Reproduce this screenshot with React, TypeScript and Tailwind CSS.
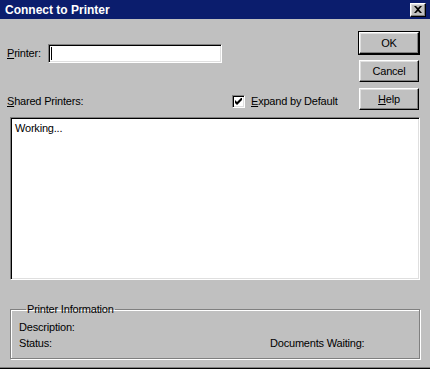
import React from "react";

const sunken =
  "border border-t-[#808080] border-l-[#808080] border-r-white border-b-white shadow-[inset_1px_1px_0_#000,inset_-1px_-1px_0_#dfdfdf]";
const raised =
  "border border-t-white border-l-white border-r-black border-b-black shadow-[inset_-1px_-1px_0_#808080,inset_1px_1px_0_#dfdfdf]";

const Btn = ({ label, def }: { label: React.ReactNode; def?: boolean }) => (
  <div className={def ? "border border-black" : "border border-transparent"}>
    <button className={`w-full h-[22px] bg-[#c0c0c0] text-[11px] ${raised}`}>{label}</button>
  </div>
);

const App = () => {
  return (
    <div
      className="w-[430px] h-[369px] bg-[#c0c0c0] flex flex-col text-black text-[11px] tracking-[-0.2px] border-b border-b-black shadow-[inset_0_-1px_0_#808080]"
      style={{ fontFamily: '"Liberation Sans", Arial, sans-serif' }}
    >
      {/* title bar */}
      <div className="h-[19px] bg-[#0b1d6d] flex items-center justify-between pl-[5px] pr-[4px]">
        <span className="text-white font-bold text-[12px] leading-none tracking-normal">Connect to Printer</span>
        <div className={`w-[16px] h-[14px] bg-[#c0c0c0] flex items-center justify-center ${raised}`}>
          <svg width="8" height="7" viewBox="0 0 8 7">
            <path d="M0 0h2l2 2 2-2h2L5 3.5 8 7H6L4 5 2 7H0l3-3.5z" fill="#000" />
          </svg>
        </div>
      </div>

      <div className="flex-1 flex flex-col pl-[7px] pr-[10px]">
        {/* top area */}
        <div className="h-[98px] flex">
          <div className="flex-1 flex flex-col pt-[25px]">
            <div className="flex items-center h-[19px]">
              <span className="w-[41px]">
                <span className="underline">P</span>rinter:
              </span>
              <div className={`w-[174px] h-[19px] bg-white flex items-center pl-[2px] ${sunken}`}>
                <span className="w-[1px] h-[13px] bg-black" />
              </div>
            </div>
            <div className="flex items-center h-[13px] mt-[32px]">
              <span className="w-[225px]">
                <span className="underline">S</span>hared Printers:
              </span>
              <div className={`w-[13px] h-[13px] bg-white flex items-center justify-center ${sunken}`}>
                <svg width="7" height="7" viewBox="0 0 7 7">
                  <path d="M0 2v3l2 2 5-5V-1L2 4z" fill="#000" />
                </svg>
              </div>
              <span className="ml-[6px]">
                <span className="underline">E</span>xpand by Default
              </span>
            </div>
          </div>
          <div className="w-[62px] flex flex-col gap-[4px] pt-[12px]">
            <Btn label="OK" def />
            <Btn label="Cancel" />
            <Btn
              label={
                <>
                  <span className="underline">H</span>elp
                </>
              }
            />
          </div>
        </div>

        {/* list */}
        <div className={`ml-[3px] h-[163px] bg-white px-[4px] pt-[2px] ${sunken}`}>
          <span className="leading-[14px]">Working...</span>
        </div>

        {/* group box */}
        <fieldset className="ml-[3px] mt-[22px] border border-[#808080] shadow-[inset_1px_1px_0_#fff,1px_1px_0_#fff] pl-[8px] pb-[7px]">
          <legend className="ml-[7px] px-[1px] leading-[14px]">Printer Information</legend>
          <div className="leading-[16px] mt-[3px]">Description:</div>
          <div className="leading-[16px] flex">
            <span className="w-[251px]">Status:</span>
            <span>Documents Waiting:</span>
          </div>
        </fieldset>
      </div>
    </div>
  );
};

export default App;
